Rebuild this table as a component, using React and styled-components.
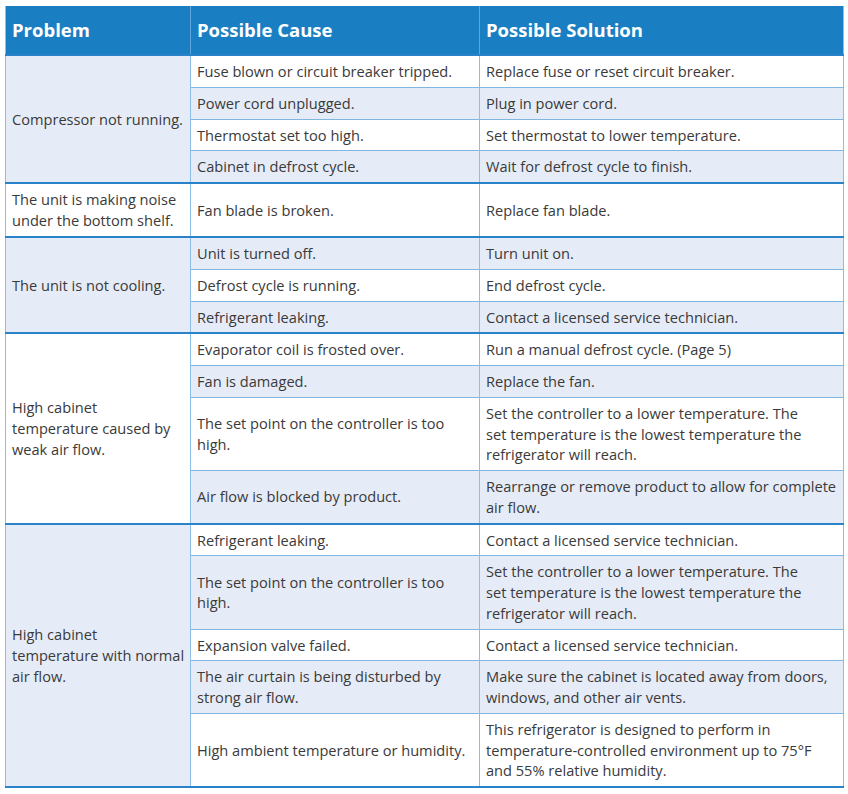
import styled, { createGlobalStyle } from "styled-components";

const GlobalStyle = createGlobalStyle`
  body {
    margin: 0;
    background: #fff;
    font-family: "Open Sans", "Liberation Sans", sans-serif;
  }
`;

const Page = styled.div`
  padding: 6px 5px;
`;

const Table = styled.table`
  width: 838px;
  border-collapse: collapse;
  table-layout: fixed;
  color: #3a3a3a;
  font-size: 14.6px;
  line-height: 20.75px;
  border-left: 1px solid #8dbfe6;
  border-right: 1px solid #8dbfe6;
  border-bottom: 2px solid #2a83c8;
`;

const HeadCell = styled.th`
  background: #1a7fc2;
  color: #fff;
  font-size: 18.5px;
  font-weight: 700;
  text-align: left;
  height: 48px;
  padding: 0 6px;
  border-left: 1px solid #5fa6dc;
  &:first-child {
    border-left: none;
  }
`;

const Cell = styled.td`
  padding: 5px 6px;
  vertical-align: middle;
  white-space: pre;
  background: ${(p) => (p.$shaded ? "#e6ecf7" : "#fff")};
  border-left: 1px solid #8dbfe6;
  border-top: ${(p) => (p.$groupStart ? "2px solid #2a83c8" : "1px solid #7fb6e2")};
`;

const setPoint = "The set point on the controller is too\nhigh.";
const lowerTemp =
  "Set the controller to a lower temperature. The\nset temperature is the lowest temperature the\nrefrigerator will reach.";

const groups = [
  {
    problem: "Compressor not running.",
    rows: [
      ["Fuse blown or circuit breaker tripped.", "Replace fuse or reset circuit breaker."],
      ["Power cord unplugged.", "Plug in power cord."],
      ["Thermostat set too high.", "Set thermostat to lower temperature."],
      ["Cabinet in defrost cycle.", "Wait for defrost cycle to finish."],
    ],
  },
  {
    problem: "The unit is making noise\nunder the bottom shelf.",
    rows: [["Fan blade is broken.", "Replace fan blade."]],
    tall: true,
  },
  {
    problem: "The unit is not cooling.",
    rows: [
      ["Unit is turned off.", "Turn unit on."],
      ["Defrost cycle is running.", "End defrost cycle."],
      ["Refrigerant leaking.", "Contact a licensed service technician."],
    ],
  },
  {
    problem: "High cabinet\ntemperature caused by\nweak air flow.",
    rows: [
      ["Evaporator coil is frosted over.", "Run a manual defrost cycle. (Page 5)"],
      ["Fan is damaged.", "Replace the fan."],
      [setPoint, lowerTemp],
      ["Air flow is blocked by product.", "Rearrange or remove product to allow for complete\nair flow."],
    ],
  },
  {
    problem: "High cabinet\ntemperature with normal\nair flow.",
    rows: [
      ["Refrigerant leaking.", "Contact a licensed service technician."],
      [setPoint, lowerTemp],
      ["Expansion valve failed.", "Contact a licensed service technician."],
      [
        "The air curtain is being disturbed by\nstrong air flow.",
        "Make sure the cabinet is located away from doors,\nwindows, and other air vents.",
      ],
      [
        "High ambient temperature or humidity.",
        "This refrigerator is designed to perform in\ntemperature-controlled environment up to 75°F\nand 55% relative humidity.",
      ],
    ],
  },
];

const App = () => {
  let rowIndex = 0;
  return (
    <Page>
      <GlobalStyle />
      <Table>
        <colgroup>
          <col style={{ width: 185 }} />
          <col style={{ width: 289 }} />
          <col style={{ width: 364 }} />
        </colgroup>
        <thead>
          <tr>
            <HeadCell>Problem</HeadCell>
            <HeadCell>Possible Cause</HeadCell>
            <HeadCell>Possible Solution</HeadCell>
          </tr>
        </thead>
        <tbody>
          {groups.map((g, gi) =>
            g.rows.map((r, ri) => {
              const shaded = rowIndex++ % 2 === 1;
              const start = ri === 0;
              return (
                <tr key={`${gi}-${ri}`}>
                  {start && (
                    <Cell rowSpan={g.rows.length} $shaded={gi % 2 === 0} $groupStart>
                      {g.problem}
                    </Cell>
                  )}
                  <Cell $shaded={shaded} $groupStart={start} style={g.tall ? { height: 42 } : undefined}>
                    {r[0]}
                  </Cell>
                  <Cell $shaded={shaded} $groupStart={start}>
                    {r[1]}
                  </Cell>
                </tr>
              );
            })
          )}
        </tbody>
      </Table>
    </Page>
  );
};

export default App;
